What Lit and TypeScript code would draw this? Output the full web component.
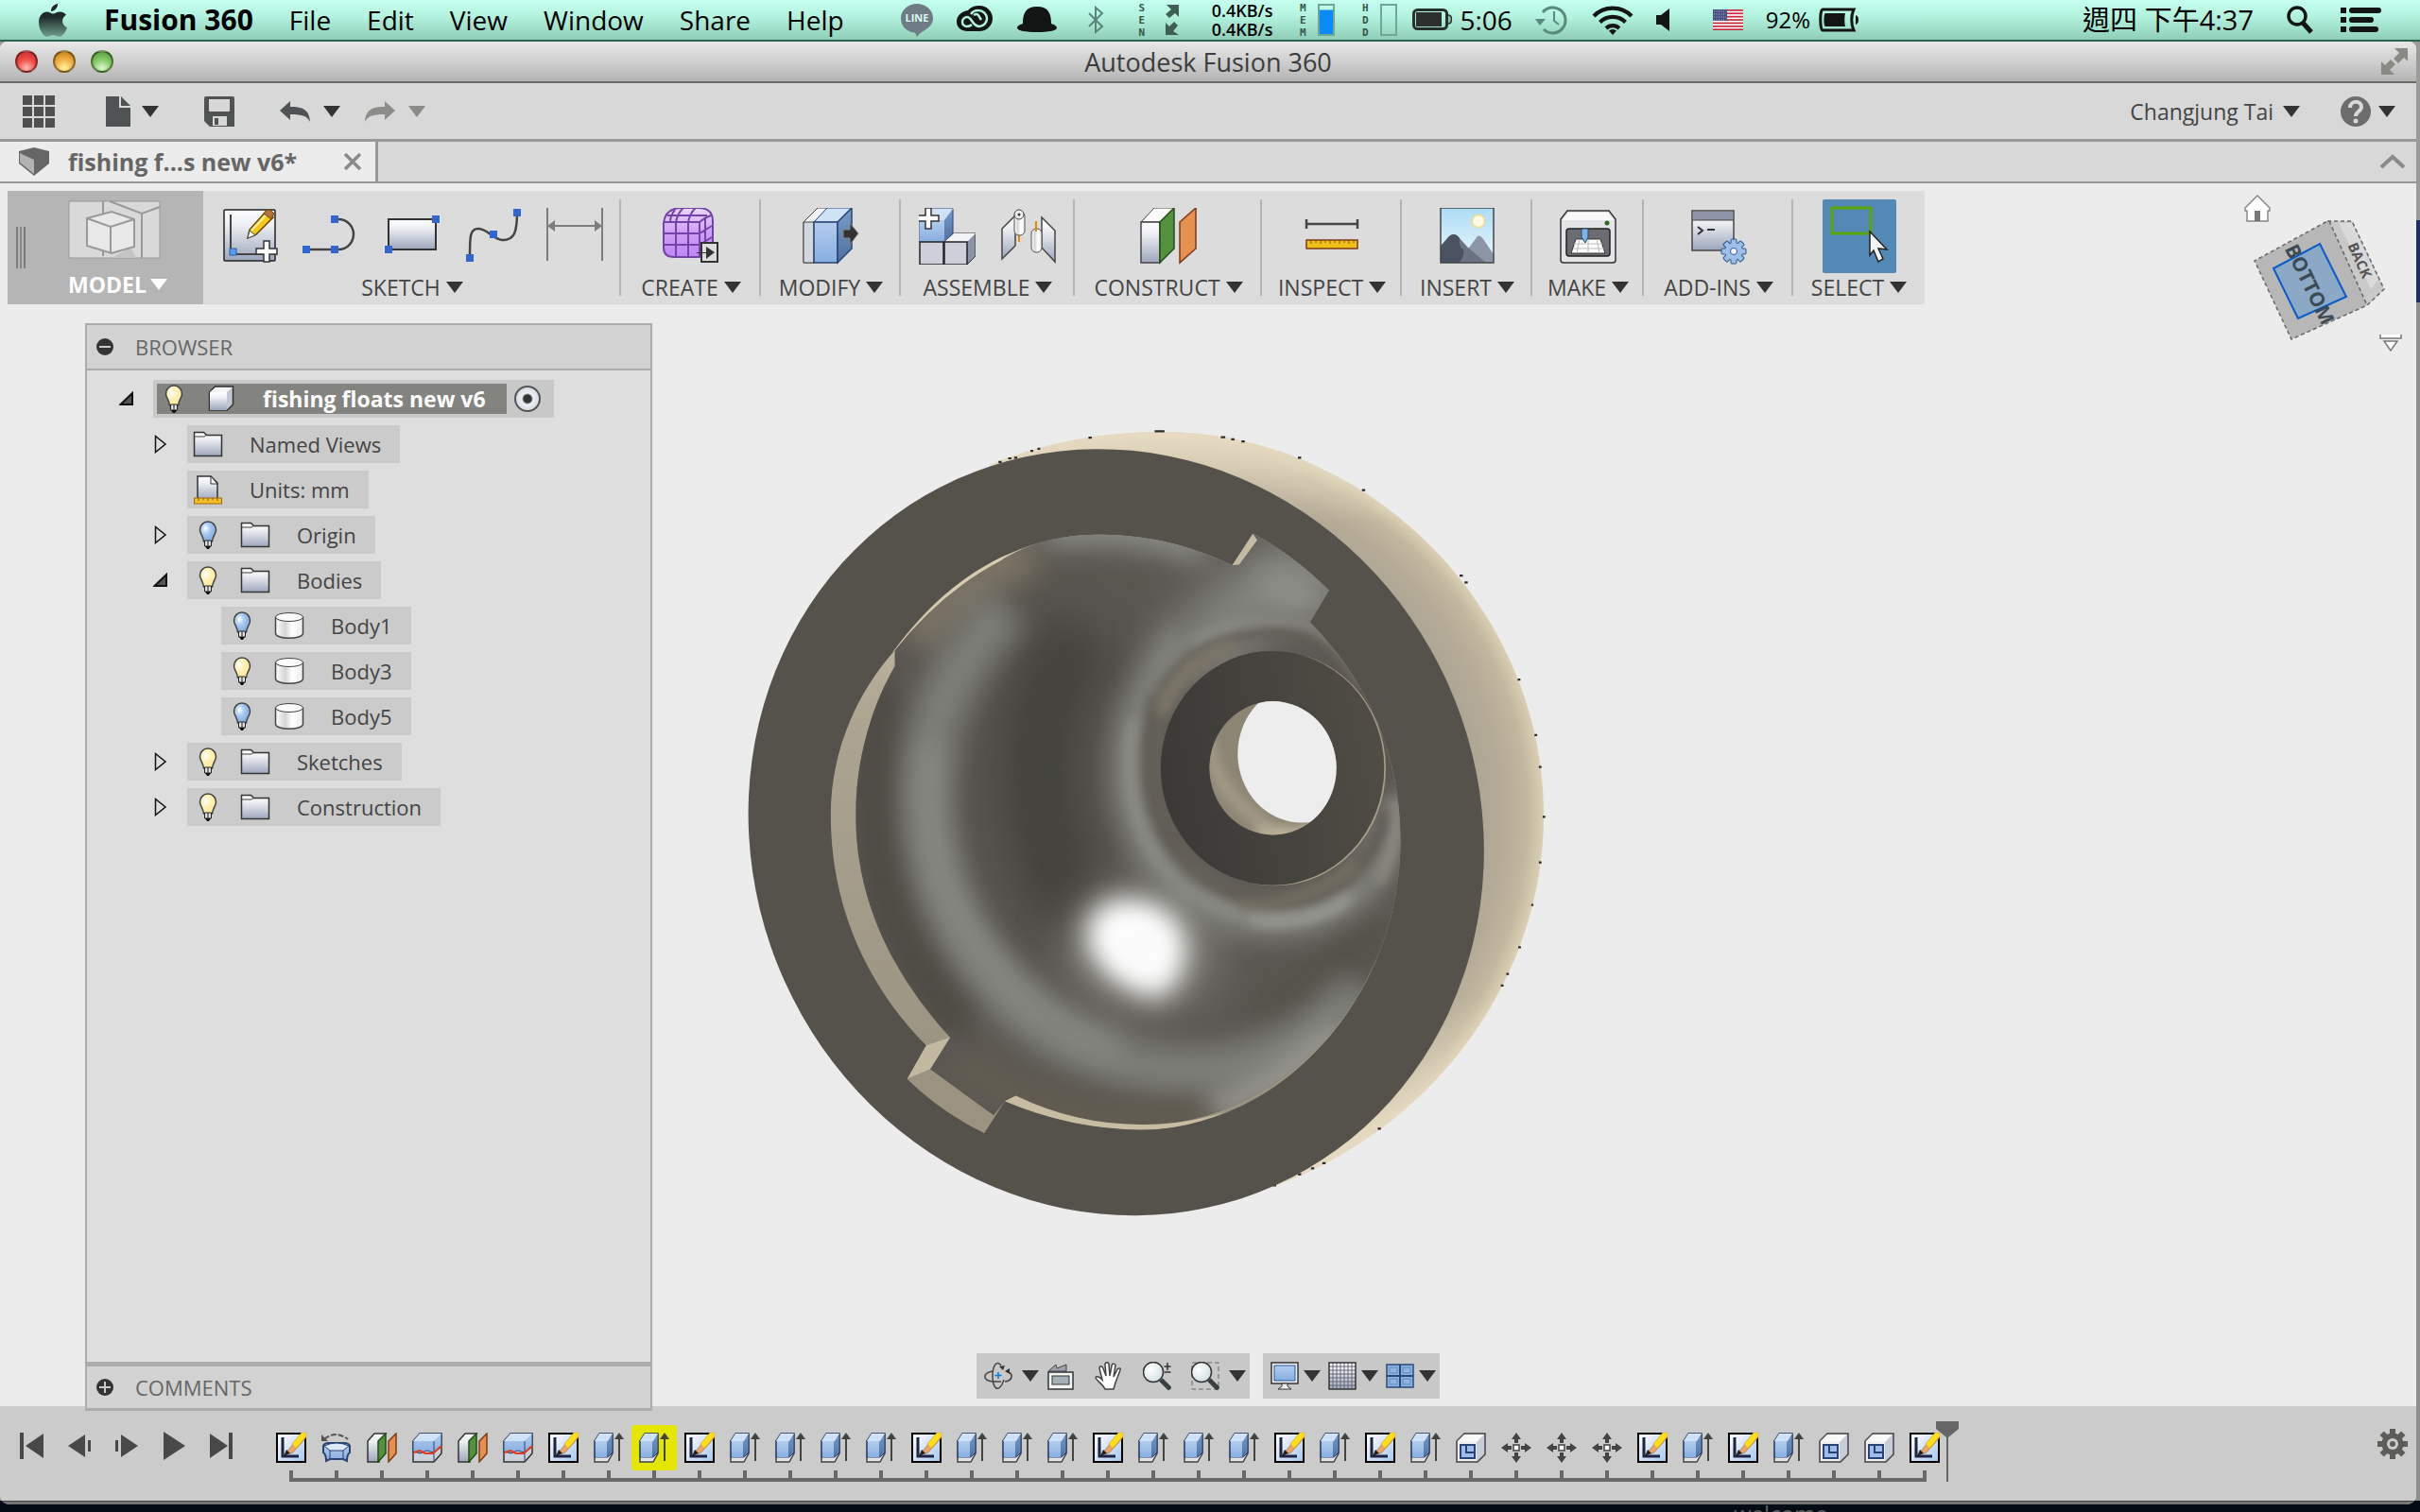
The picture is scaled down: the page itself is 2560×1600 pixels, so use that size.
import { LitElement, html, svg, css, nothing, TemplateResult, SVGTemplateResult } from "lit";
import { customElement, state } from "lit/decorators.js";
import { classMap } from "lit/directives/class-map.js";

const icon = (w: number, h: number, body: SVGTemplateResult, cls = "") =>
  html`<svg class=${cls} width=${w} height=${h} viewBox="0 0 ${w} ${h}" fill="none" aria-hidden="true">${body}</svg>`;

const caret = (w = 18) => icon(w, 12, svg`<path d="M0 0H${w}L${w / 2} 12Z" fill="currentColor"/>`, "caret");

/* ---------- shared paint ---------- */
const defs = svg`<defs>
  <linearGradient id="steel" x1="0" y1="0" x2="0" y2="1"><stop offset="0" stop-color="#fff"/><stop offset=".3" stop-color="#eceef2"/><stop offset="1" stop-color="#9ca6bb"/></linearGradient>
  <linearGradient id="paper" x1="0" y1="0" x2="1" y2="1"><stop offset="0" stop-color="#fff"/><stop offset="1" stop-color="#a9c8ee"/></linearGradient>
  <linearGradient id="sky" x1="0" y1="0" x2="0" y2="1"><stop offset="0" stop-color="#acdcf6"/><stop offset="1" stop-color="#eef8fc"/></linearGradient>
  <linearGradient id="side" x1="0" y1="0" x2="0" y2="1"><stop offset="0" stop-color="#7a9ccb"/><stop offset="1" stop-color="#4e709f"/></linearGradient>
  <linearGradient id="face" x1="0" y1="0" x2="0" y2="1"><stop offset="0" stop-color="#b4cdee"/><stop offset="1" stop-color="#86aee0"/></linearGradient>
  <linearGradient id="purple" x1="0" y1="0" x2="0" y2="1"><stop offset="0" stop-color="#ead9fa"/><stop offset=".5" stop-color="#cf9ff5"/><stop offset="1" stop-color="#bf86f6"/></linearGradient>
  <linearGradient id="tube" x1="0" y1="0" x2="1" y2="0"><stop offset="0" stop-color="#fff"/><stop offset=".35" stop-color="#d4d4d4"/><stop offset=".6" stop-color="#fff"/><stop offset="1" stop-color="#ededed"/></linearGradient>
  <radialGradient id="bulbOn" cx=".35" cy=".35" r=".7"><stop offset="0" stop-color="#fff"/><stop offset=".4" stop-color="#fff3bd"/><stop offset="1" stop-color="#fbe694"/></radialGradient>
  <radialGradient id="bulbOff" cx=".35" cy=".35" r=".7"><stop offset="0" stop-color="#fff"/><stop offset=".4" stop-color="#a9caf0"/><stop offset="1" stop-color="#7fa8dc"/></radialGradient>
  <radialGradient id="lens" cx=".35" cy=".35" r=".8"><stop offset="0" stop-color="#fff"/><stop offset="1" stop-color="#ccdcdc"/></radialGradient>
  <linearGradient id="apple" x1="0" y1="0" x2="0" y2="1"><stop offset="0" stop-color="#1c2322"/><stop offset=".4" stop-color="#1e2b28"/><stop offset="1" stop-color="#6f9d8e"/></linearGradient>
</defs>`;

/* ---------- menu bar ---------- */
const appleLogo = icon(32, 38, svg`<path fill="url(#apple)" d="M21 2c.4 3.600-3 8-7 8-.4-4 3.200-7.500 7-8zM16 12.500c1.800 0 4-2 7.500-2 3 0 5.200 1.500 6.500 3.300-5.800 3.500-4.900 11 1 13.400-1.600 4.600-4.900 9.600-8.300 9.600-2.700 0-3.400-1.600-6.500-1.600s-4 1.600-6.500 1.600C5.500 36.800 1 28.500 1 21.500c0-7 4.300-11 8.600-11 2.900 0 4.900 2 6.400 2z"/>`);
const lineBadge = icon(36, 36, svg`<path fill="#6f7b85" d="M18 1a17 15.500 0 0 1 17 15.500c0 7-6 11-10.500 13.500-3 2-5 3.500-6.500 6-1-2-1-3.500-2.500-4.500C7 30.500 1 25 1 16.500A17 15.500 0 0 1 18 1z"/><text x="18" y="20" text-anchor="middle" font-size="11" font-weight="700" fill="#d9fbf0">LINE</text>`);
const creative = icon(40, 30, svg`<path fill="#121514" d="M12 5C15 1 20 0 24 0c8 0 14 6 14 13.500S32 27 24 27H11C5 27 0 23 0 17S5 6 12 5z"/><path d="M23 5c5 0 9 4 9 8.500S28.500 22 24 22c-4 0-6-3-8-6s-3-4-5-4-5 2-5 5 2 5 5 5 4-1 5-2M15 9c2-3 4-4 8-4M18 10c5-3 5 1 8 5" stroke="#b4f0de" stroke-width="2.500"/>`);
const hat = icon(42, 30, svg`<path fill="#121514" d="M6 19C6 8 9 1 21 1s15 7 15 18c3 1 6 2.500 6 4.500 0 3-9 4.500-21 4.500S0 26.500 0 23.500C0 21.500 3 20 6 19z"/>`);
const bluetooth = icon(34, 30, svg`<path d="M10 8l14 14-7 6V2l7 6-14 14" stroke="#5b8579" stroke-width="2"/>`);
const netArrows = icon(16, 34, svg`<path fill="#3f5f55" d="M2 1h13v13l-4-4-6 5-4-4 6-5zM15 33H1V20l4 4 5-5 4 4-5 6z"/>`);
const meter = (fill: number) => icon(18, 34, svg`<rect x="1" y="1" width="16" height="32" stroke="#6fa695" stroke-width="2"/><rect x="2" y=${2 + 30 * (1 - fill)} width="14" height=${30 * fill} fill="#0a8bf5"/>`);
const battery = icon(42, 24, svg`<rect x="1.500" y="1.500" width="35" height="20" rx="4" stroke="#26302d" stroke-width="3"/><rect x="4" y="4" width="27" height="15" fill="#2b302e"/><path d="M38 7c3 0 3.500 2 3.500 4.500S41 16 38 16" fill="#8fbfaf" stroke="#26302d" stroke-width="1.500"/>`);
const batteryBold = icon(44, 26, svg`<path d="M5 2H38c-3 6-3 16 0 22H5C2 24 2 2 5 2z" stroke="#121514" stroke-width="3"/><path d="M8 6h21c-1 4-1 10 0 14H8C6 20 6 6 8 6z" fill="#121514"/><path d="M40 8c4 1 4 9 0 10z" fill="#121514"/>`);
const timeMachine = icon(36, 32, svg`<path d="M8 8A13.500 13.500 0 1 1 9 26" stroke="#5b8a7c" stroke-width="3"/><path d="M0 15h11l-6 7z" fill="#5b8a7c"/><path d="M20 7v10l5 4" stroke="#5b8a7c" stroke-width="2"/>`);
const wifi = icon(44, 32, svg`<path d="M2 12a28 28 0 0 1 40 0M8.500 18.500a19 19 0 0 1 27 0M15 25a10 10 0 0 1 14 0" stroke="#121514" stroke-width="4.200"/><path d="M22 32l-4-4.500a6 6 0 0 1 8 0z" fill="#121514"/>`);
const speaker = icon(36, 24, svg`<path fill="#121514" d="M0 7h5l9-7v24l-9-7H0z"/>`);
const flag = icon(32, 22, svg`<rect width="32" height="22" fill="#fff"/>${[0, 1, 2, 3, 4, 5, 6].map((i) => svg`<rect y=${i * 3.4} width="32" height="1.700" fill="#c8283c"/>`)}<rect width="15" height="12" fill="#474f7f"/><path d="M1 2h13M1 5h13M1 8h13M1 11h13" stroke="#b9bfd8" stroke-width="1" stroke-dasharray="1 1.500"/>`);
const search = icon(44, 32, svg`<circle cx="22" cy="12" r="9" stroke="#121514" stroke-width="3.500"/><path d="M28 19l9 10" stroke="#121514" stroke-width="5"/>`);
const listIcon = icon(44, 28, svg`<path d="M0 4h6M0 14h6M0 24h6" stroke="#121514" stroke-width="6"/><path d="M12 4h28M12 14h20M12 24h25" stroke="#121514" stroke-width="6" stroke-linecap="round"/>`);

/* ---------- window and quick bar ---------- */
const fullscreen = icon(30, 30, svg`<path fill="#8a8a84" d="M15 1h14v14l-4-4-6 6-5-5 6-6zM15 29H1V15l4 4 6-6 5 5-6 6z"/>`);
const apps = icon(34, 34, svg`${[0, 12, 24].map((y) => [0, 12, 24].map((x) => svg`<rect x=${x} y=${y} width="10" height="10" fill="#505050"/>`))}`);
const fileIcon = icon(26, 32, svg`<path fill="#505353" d="M0 0h14v12h12v20H0z"/><path fill="#505353" d="M16 0l10 10H16z"/>`);
const saveIcon = icon(32, 32, svg`<path fill="#505353" fill-rule="evenodd" d="M2 0h28q2 0 2 2v30H6l-6-6V2q0-2 2-2zM5 3v12q0 1 1 1h20q1 0 1-1V3zM9 21v10h15V21z"/><path d="M11 23h4v7h-4z" fill="#505353"/>`);
const undoIcon = icon(32, 22, svg`<path fill="currentColor" d="M0 10L11 0v6c12 0 20 2 21 16-3-6-8-8-21-8v6z"/>`);
const redoIcon = icon(32, 22, svg`<path fill="currentColor" d="M32 10L21 0v6C9 6 1 8 0 22c3-6 8-8 21-8v6z"/>`);
const help = icon(32, 32, svg`<circle cx="16" cy="16" r="16" fill="#6c6c6c"/><path d="M10 12c0-8 12-8 12-1 0 5-6 5-6 10" stroke="#d8d8d8" stroke-width="4"/><circle cx="16" cy="26" r="2.500" fill="#d8d8d8"/>`);
const docCube = icon(32, 30, svg`<path fill="#666" d="M0 4L16 0l16 4v13L16 30 0 17z"/><path fill="#b2b2b2" d="M1 6l15 7v15L1 16z"/>`);
const closeX = icon(20, 20, svg`<path d="M2 2l16 16M18 2L2 18" stroke="#8a8a8a" stroke-width="3.500"/>`);
const chevUp = icon(28, 16, svg`<path d="M2 14L14 3l12 11" stroke="#8a8a8a" stroke-width="4"/>`);

/* ---------- ribbon ---------- */
const plus = (x: number, y: number) => svg`<path transform="translate(${x} ${y})" d="M-3-11h6v8h8v6h-8v8h-6v-8h-8v-6h8z" fill="#fff" stroke="#333" stroke-width="1.500"/>`;
const node = (x: number, y: number) => svg`<rect x=${x - 4} y=${y - 4} width="8" height="8" fill="#3566cf"/>`;
const ribbonIcons: Record<string, TemplateResult> = {
  sketch: icon(60, 60, svg`<rect x="3" y="2" width="54" height="54" rx="1" fill="url(#steel)" stroke="#222" stroke-width="1.500"/><path d="M10 7v42h36" stroke="#444" stroke-width="2"/><rect x="9" y="43" width="7" height="7" fill="#5b9cf0" stroke="#2a5fa8"/><path d="M28 32l2-9L47 4l8 6-18 18z" fill="#f6c81a" stroke="#6b4b10" stroke-width="1.500"/><path d="M32 24L49 6" stroke="#fff2a0" stroke-width="2"/><path d="M45 6l3-4q5-1 8 4l-3 6z" fill="#b9703a" stroke="#6b4b10"/><path d="M28 32l2-8 6 5z" fill="#fff" stroke="#444"/>${plus(48, 46)}`),
  line: icon(60, 60, svg`<path d="M4 44h34a16 16 0 0 0 0-32h-4" stroke="#444" stroke-width="2.500"/>${node(4, 44)}${node(34, 44)}${node(34, 12)}`),
  rect: icon(60, 60, svg`<rect x="5" y="12" width="50" height="32" fill="url(#steel)" stroke="#333" stroke-width="2"/>${node(5, 44)}${node(55, 12)}`),
  spline: icon(60, 60, svg`<path d="M5 53C5 30 5 22 14 22c10 0 16 12 26 12 12 0 15-8 15-30" stroke="#444" stroke-width="2.500"/>${node(5, 53)}${node(30, 28)}${node(55, 5)}`),
  dimension: icon(60, 60, svg`<path d="M1 0v56M59 0v56M6 19h48" stroke="#7d7d7d" stroke-width="2"/><path d="M1 19l8-6v12zM59 19l-8-6v12z" fill="#7d7d7d"/>`),
  form: icon(60, 60, svg`<path d="M1 16Q3 0 20 0h18q15 0 15 14v22q0 6-6 12-3 4-10 4H12Q1 52 1 42z" fill="url(#purple)" stroke="#7443a8" stroke-width="2"/><path d="M39 15v36M39 15H2M39 15q6-5 12-7M13 2Q8 8 8 15M1 27h38l13-8M1 39h38l13-8M14 52V15q2-10 8-15M27 52V15q2-10 8-15M45 47V11M5 8h42" stroke="#7443a8" stroke-width="2"/><rect x="41" y="37" width="17" height="20" fill="#ddd" stroke="#333" stroke-width="2"/><path d="M36 47h10v-6l9 6-9 7v-6H36z" fill="#333"/>`),
  press: icon(60, 60, svg`<path d="M1 15L16 0h11L12 15v43H1z" fill="#f4f4f6" stroke="#444"/><path d="M1 15h11v43H1z" fill="#d3d7df" stroke="#444"/><path d="M12 15L26 0h26L37 15z" fill="#cfe2f6" stroke="#2a4372"/><path d="M12 15h25v43H12z" fill="url(#face)" stroke="#2a4372" stroke-width="1.500"/><path d="M37 15L52 0v43L37 58z" fill="url(#side)" stroke="#2a4372" stroke-width="1.500"/><path d="M43 23h7v-7l9 11-9 12v-7h-7z" fill="#333" stroke="#888"/>`),
  component: icon(60, 60, svg`<path d="M1 13L12 1h24v26L27 36H1z" fill="url(#side)" stroke="#2a4372"/><path d="M1 13L12 1h24L27 13z" fill="#cfe2f6"/><path d="M1 13h26v23H1z" fill="url(#face)"/><path d="M27 36l10-9h23v24l-9 9H27z" fill="#8c93a6" stroke="#333"/><path d="M27 36l10-9h23l-9 9z" fill="#f2f3f5"/><path d="M1 36h25v24H1zM27 36h24v24H27z" fill="#cdd0da" stroke="#222" stroke-width="1.500"/>${plus(10, 11)}`),
  joint: icon(60, 60, svg`<path d="M2 22L16 8v32L2 54z" fill="url(#steel)" stroke="#444" stroke-width="1.500"/><path d="M44 10l14 14v33L44 42z" fill="url(#steel)" stroke="#444" stroke-width="1.500"/><path d="M20 26v10M38 14v14" stroke="#e08a00" stroke-width="2"/><rect x="15" y="4" width="11" height="25" rx="5" fill="url(#tube)" stroke="#555"/><circle cx="20" cy="7" r="5" fill="#eee" stroke="#444"/><circle cx="20" cy="7" r="1.500" fill="#333"/><rect x="33" y="22" width="11" height="25" rx="5" fill="url(#tube)" stroke="#555"/><path d="M38 14v11" stroke="#e08a00" stroke-width="2"/>`),
  plane: icon(60, 60, svg`<path d="M1 15L15 0h21L21 15z" fill="#fafafa" stroke="#444"/><path d="M1 15h20v43H1z" fill="url(#steel)" stroke="#444" stroke-width="1.500"/><path d="M21 15L36 0v43L21 58z" fill="#55903f" stroke="#234d17" stroke-width="1.500"/><path d="M42 15L59 0v43L42 58z" fill="#e8904f" stroke="#7c3a14" stroke-width="1.500"/>`),
  measure: icon(60, 60, svg`<path d="M3 17h54M3 12v10M57 12v10" stroke="#444" stroke-width="2.500"/><rect x="3" y="34" width="54" height="9" fill="#f0c01a" stroke="#7c3a14" stroke-width="1.500"/><path d="M8 35v3M13 35v2M18 35v3M23 35v2M28 35v3M33 35v2M38 35v3M43 35v2M48 35v3M53 35v2" stroke="#7c5a14"/>`),
  picture: icon(60, 60, svg`<rect x="2" y="0" width="56" height="58" fill="url(#sky)"/><circle cx="42" cy="14" r="6.500" fill="#fffbe6" stroke="#f5dd88" stroke-width="1.500"/><path d="M26 50l15-20q3-2 6 3l11 16v9H30z" fill="#8b95a6"/><path d="M2 40l8-9q6-6 11 0l10 11 19 16H2z" fill="#6c7484"/><path d="M2 58V41l9-11q6-5 11 2-1 10 4 12 2 8-5 14z" fill="#4b5362"/><rect x="2" y="0" width="56" height="58" stroke="#444" stroke-width="1.500"/>`),
  printer: icon(60, 60, svg`<path d="M1 12L8 3h44l7 9v43q0 3-3 3H4q-3 0-3-3z" fill="#e4e4e6" stroke="#333" stroke-width="1.500"/><path d="M3 13L9 5h42l6 8z" fill="#fafafa"/><rect x="7" y="22" width="46" height="29" rx="3" fill="#6b6d70" stroke="#222" stroke-width="1.500"/><path d="M17 33h26l5 15H12z" fill="#fff" stroke="#333"/><path d="M21 33l-3 15M30 33v15M39 33l3 15M15 38h30M14 43h33" stroke="#bbb"/><path d="M23 22h7v9l-3 6-4-6z" fill="#7fb0e6" stroke="#2a4372"/><circle cx="50" cy="16" r="2.500" fill="#2e6a20"/>`),
  script: icon(60, 60, svg`<rect x="2" y="3" width="44" height="42" fill="url(#steel)" stroke="#444" stroke-width="1.500"/><rect x="3" y="4" width="42" height="9" fill="#8d95a6"/><path d="M2 13h44" stroke="#444"/><path d="M8 20l5 4-5 4M18 23h8" stroke="#333" stroke-width="2"/><g transform="translate(46 46)">${[0, 45, 90, 135].map((a) => svg`<rect x="-3" y="-13" width="6" height="26" rx="1" transform="rotate(${a})" fill="#9dbfe8" stroke="#2a5590"/>`)}<circle r="9" fill="#9dbfe8"/><circle r="3.500" fill="#fff" stroke="#2a5590"/></g>`),
  select: icon(78, 78, svg`<rect width="78" height="78" rx="2" fill="#5489b5"/><rect x="10" y="9" width="41" height="27" stroke="#59a608" stroke-width="3"/><path d="M50 34l18 19-9-1 5 11-5 3-5-12-4 5z" fill="#f5f5f5" stroke="#222" stroke-width="1.500"/>`),
};

const workspaceIcon = icon(98, 62, svg`<rect x="1" y="1" width="96" height="60" fill="#d9d9d9" stroke="#999"/><path d="M37 1v58M44 1l34 13L97 7M78 14v47" stroke="#999" stroke-width="2"/><path d="M66 50l6 11H46z" fill="#c4c4c4"/><path d="M20 19l26-7 24 8v29l-24 7-26-8z" fill="#e8e8e8" stroke="#999" stroke-width="2"/><path d="M20 19l25 9 25-8M45 28v28" stroke="#999" stroke-width="2"/>`);

interface Group { label: string; icons: string[]; }
const groups: Group[] = [
  { label: "SKETCH", icons: ["sketch", "line", "rect", "spline", "dimension"] },
  { label: "CREATE", icons: ["form"] },
  { label: "MODIFY", icons: ["press"] },
  { label: "ASSEMBLE", icons: ["component", "joint"] },
  { label: "CONSTRUCT", icons: ["plane"] },
  { label: "INSPECT", icons: ["measure"] },
  { label: "INSERT", icons: ["picture"] },
  { label: "MAKE", icons: ["printer"] },
  { label: "ADD-INS", icons: ["script"] },
  { label: "SELECT", icons: ["select"] },
];

/* ---------- browser tree ---------- */
const bulb = (on: boolean) => icon(32, 32, svg`<path d="M16 2c5 0 8.500 4 8.500 9 0 4-3.500 6-4 12h-9c-.5-6-4-8-4-12 0-5 3.500-9 8.500-9z" fill="url(#${on ? "bulbOn" : "bulbOff"})" stroke="#444" stroke-width="1.500"/><path d="M12.500 22h7v6h-7z" fill="#ddd" stroke="#222"/><path d="M16 22v6" stroke="#222"/><path d="M13 28h6l-2 3h-2z" fill="#111"/>`);
const treeIcons: Record<string, TemplateResult> = {
  folder: icon(32, 32, svg`<path d="M1.500 3.500h10l3 3h16v22h-29z" fill="url(#steel)" stroke="#333" stroke-width="1.500"/><path d="M2 8h10l3-2" stroke="#444"/>`),
  units: icon(32, 32, svg`<path d="M5 2h14l7 7v18H5z" fill="url(#steel)" stroke="#333" stroke-width="1.500"/><path d="M19 2v8h7z" fill="#fff" stroke="#333"/><rect x="1.500" y="25" width="29" height="6" fill="#f2c026" stroke="#a5660e"/><path d="M6 25v3M11 25v2M16 25v3M21 25v2M26 25v3" stroke="#7c5a14"/>`),
  body: icon(32, 32, svg`<path d="M1.500 7v17c0 7 29 7 29 0V7z" fill="url(#tube)" stroke="#444" stroke-width="1.500"/><ellipse cx="16" cy="7" rx="14.500" ry="4.500" fill="#fafafa" stroke="#444"/>`),
  part: icon(32, 32, svg`<path d="M3.500 9l6-6h19v19l-6 6h-19z" fill="#c3c7d2" stroke="#333" stroke-width="1.500"/><path d="M4 9l6-5h18l-6 5z" fill="#f3f4f6"/><path d="M4 9h18v19H4z" fill="url(#steel)"/>`),
};
const closedTri = icon(14, 20, svg`<path d="M1.500 1.500L12 10 1.500 18.500z" stroke="#111" stroke-width="1.500"/>`);
const openTri = icon(16, 16, svg`<path d="M1.500 14L14 2v12z" fill="#555" stroke="#111" stroke-width="2"/>`);
const minusDot = icon(18, 18, svg`<circle cx="9" cy="9" r="9" fill="#333"/><path d="M3 9h12" stroke="#ccc" stroke-width="2"/>`);
const plusDot = icon(18, 18, svg`<circle cx="9" cy="9" r="9" fill="#333"/><path d="M3 9h12M9 3v12" stroke="#ccc" stroke-width="2"/>`);

interface Node { label: string; level: number; kind: string; bulb?: boolean; open?: boolean; root?: boolean; }
const nodes: Node[] = [
  { label: "fishing floats new v6", level: 0, kind: "part", bulb: true, open: true, root: true },
  { label: "Named Views", level: 1, kind: "folder", open: false },
  { label: "Units: mm", level: 1, kind: "units" },
  { label: "Origin", level: 1, kind: "folder", bulb: false, open: false },
  { label: "Bodies", level: 1, kind: "folder", bulb: true, open: true },
  { label: "Body1", level: 2, kind: "body", bulb: false },
  { label: "Body3", level: 2, kind: "body", bulb: true },
  { label: "Body5", level: 2, kind: "body", bulb: false },
  { label: "Sketches", level: 1, kind: "folder", bulb: true, open: false },
  { label: "Construction", level: 1, kind: "folder", bulb: true, open: false },
];

/* ---------- navigation bar ---------- */
const glass = svg`<circle cx="11" cy="11" r="10.500" fill="url(#lens)" stroke="#333" stroke-width="1.500"/><path d="M19 19l10 10" stroke="#3a3f42" stroke-width="5"/>`;
const nav: Record<string, TemplateResult> = {
  orbit: icon(30, 30, svg`<path d="M18 4C14-2 9 3 9 15s5 18 10 9l2-5" stroke="#444" stroke-width="1.500"/><path d="M9 10C-2 12-2 20 10 21h8M24 10c8 3 6 10-2 11" stroke="#444" stroke-width="1.500"/><path d="M15 11v7M11.500 14.500h7" stroke="#0a78d8" stroke-width="1.500"/><path d="M22 10l5-3v6zM16 5l6-1-2 5z" fill="#333"/>`),
  look: icon(30, 30, svg`<path d="M2 10L10 3l1 4 10-4v7z" fill="#9ba3ad" stroke="#444"/><rect x="2" y="11" width="26" height="18" fill="#f4f6f6" stroke="#333" stroke-width="1.500"/><rect x="6" y="15" width="18" height="9" fill="#a5b0b8" stroke="#333"/>`),
  pan: icon(30, 30, svg`<path d="M11 29C9 24 3 21 1 17c0-2 3-2 7 2L5 7c0-3 3-3 4 0l3 8-1-12c0-3 4-3 4 0l1 12 2-11c1-3 4-2 4 0l-2 12 4-8c2-2 4-1 3 1l-5 13-2 7z" fill="#fff" stroke="#444" stroke-width="1.500"/>`),
  zoom: icon(30, 30, svg`${glass}<path d="M26 1v8M22.500 5h7M22.500 11h7" stroke="#333" stroke-width="1.500"/>`),
  fit: icon(30, 30, svg`<rect x="1" y="1" width="28" height="28" stroke="#666" stroke-dasharray="5 3"/>${glass}`),
  display: icon(30, 30, svg`<rect x="1" y="1" width="28" height="22" fill="#f2f5f8" stroke="#333" stroke-width="1.500"/><rect x="4" y="4" width="22" height="16" fill="url(#face)" stroke="#2a5590"/><path d="M12 23h6v3l4 3H8l4-3z" fill="#eee" stroke="#333"/>`),
  grid: icon(30, 30, svg`<rect x="1" y="1" width="28" height="28" fill="url(#steel)"/><path d="M1 5H29M1 9H29M1 13H29M1 17H29M1 21H29M1 25H29M5 1V29M9 1V29M13 1V29M17 1V29M21 1V29M25 1V29" stroke="#667"/><rect x="1" y="1" width="28" height="28" stroke="#333" stroke-width="1.500"/>`),
  views: icon(30, 26, svg`<rect x="1" y="1" width="28" height="24" fill="#8fb4e4" stroke="#2a4878" stroke-width="1.500"/><path d="M15 1v24M1 13h28" stroke="#2a4878" stroke-width="2"/><path d="M4 4h8v6H4zM18 4h8v6h-8zM4 16h8v6H4zM18 16h8v6h-8z" stroke="#5b86c0"/>`),
};

/* ---------- timeline ---------- */
const features: Record<string, TemplateResult> = {
  s: icon(32, 32, svg`<rect x="1" y="1" width="30" height="30" fill="url(#paper)" stroke="#000" stroke-width="2"/><path d="M7 5v20h17" stroke="#1f2540" stroke-width="3"/><path d="M10 22L28 0h4v5L17 22z" fill="#e9a56a" stroke="#8a5a20" stroke-width=".5"/><path d="M17 12L27 0h5v4L21 17z" fill="#ffdf1c" stroke="#c98a00" stroke-width=".5"/><path d="M8 25l3-7 4 4z" fill="#222"/>`),
  r: icon(32, 32, svg`<path d="M3 7q12-10 25 0" stroke="#555" stroke-width="2" stroke-dasharray="6 2"/><path d="M0 2v7h7z" fill="#555"/><path d="M2 14q1-3 6-3h16q5 0 6 3v7q-3 2-3 9l-4-2H9l-4 2q0-7-3-9z" fill="url(#face)" stroke="#2a4372" stroke-width="2"/><path d="M3 14q13-6 26 0l-6 5H9z" fill="#dbe9f8" stroke="#2a4372"/><path d="M9 19v9M23 19v9" stroke="#2a4372"/>`),
  p: icon(32, 32, svg`<path d="M1 9l7-8h12l-7 8v22H1z" fill="url(#steel)" stroke="#333" stroke-width="1.500"/><path d="M12 9l8-8v21l-8 9z" fill="#55903f" stroke="#234d17" stroke-width="1.500"/><path d="M23 9l8-8v21l-8 9z" fill="#e8904f" stroke="#7c3a14" stroke-width="1.500"/>`),
  x: icon(32, 32, svg`<path d="M1 9l7-8h23v21l-8 9H1z" fill="#ccd2dc" stroke="#333" stroke-width="1.500"/><path d="M1 9l7-8h23v14l-8 6-8-2-6 3-8-2z" fill="url(#face)" stroke="#2a4372"/><path d="M1 9l7-8h23l-8 8z" fill="#cfe2f6"/><path d="M23 9v22" stroke="#2a4372"/><path d="M2 21l6-2 6 3h8l9-8" stroke="#e03a18" stroke-width="2"/>`),
  e: icon(32, 32, svg`<path d="M1 9l5-8h14v21l-5 9H1z" fill="#e3e5ea" stroke="#444" stroke-width="1.500"/><path d="M1 9l5-8h14v20l-5 5H1z" fill="url(#side)" stroke="#2a4372"/><path d="M1 9l5-8h14l-5 8z" fill="#cfe2f6"/><path d="M2 9h12v17H2z" fill="url(#face)"/><path d="M27 4v26" stroke="#444" stroke-width="2"/><path d="M27 0l5 7H22z" fill="#444"/>`),
  h: icon(32, 32, svg`<path d="M1 9l8-8h22v22l-8 8H1z" fill="#c8ccd8" stroke="#444" stroke-width="1.500"/><path d="M2 9l7-7h21l-7 7z" fill="#fafafa"/><path d="M2 9h20v21H2z" fill="#f0f1f4"/><rect x="5" y="13" width="15" height="14" fill="#9dbdea" stroke="#2a4372" stroke-width="2"/><path d="M11 14v7h8" stroke="#2a4372" stroke-width="2"/>`),
  m: icon(32, 32, svg`<path d="M16 0l5 7h-3v4h-4V7h-3zM16 32l5-7h-3v-4h-4v4h-3zM0 16l7-5v3h4v4H7v3zM32 16l-7-5v3h-4v4h4v3z" fill="#444"/><rect x="13" y="13" width="6" height="6" fill="#fff" stroke="#444" stroke-width="1.500"/>`),
};
const featureNames: Record<string, string> = { s: "Sketch", r: "Revolve", p: "Construction plane", x: "Split body", e: "Extrude", h: "Shell", m: "Move" };
const history = "srpxpxseeseeeeseeeseeesesehmmmsesehhs";

const gear = icon(34, 34, svg`<g transform="translate(17 17)">${[0, 45, 90, 135].map((a) => svg`<rect x="-3" y="-16" width="6" height="32" transform="rotate(${a})" fill="#5c5c58"/>`)}<circle r="11.500" fill="#5c5c58"/><circle r="6" fill="#ccc"/><circle r="3" fill="#5c5c58"/></g>`);
const transport: [string, TemplateResult][] = [
  ["Go to start", icon(26, 28, svg`<path d="M0 0h4v28H0zM25 1v26L6 14z" fill="#484848"/>`)],
  ["Step back", icon(26, 28, svg`<path d="M19 2v24L1 14zM22 8h3v12h-3z" fill="#484848"/>`)],
  ["Step forward", icon(26, 28, svg`<path d="M7 2v24l18-12zM1 8h3v12H1z" fill="#484848"/>`)],
  ["Play", icon(26, 30, svg`<path d="M2 0v30l23-15z" fill="#484848"/>`)],
  ["Go to end", icon(26, 28, svg`<path d="M21 0h4v28h-4zM1 1v26l19-13z" fill="#484848"/>`)],
];

/* ---------- 3D body ---------- */
const cavity = "M383 1205C280 1100 207 950 207 770C207 650 255 540 325 460C420 320 560 242 700 242C790 242 870 262 947 300L985 240Q1060 280 1125 347L1090 407C1200 520 1257 660 1257 820C1257 1110 1040 1363 780 1363Q650 1363 528 1310L490 1370Q410 1330 348 1268Z";
const hull = "M500 110Q650 48 820 48C1200 50 1521 380 1521 770C1521 1080 1320 1360 1020 1472Z";
const modelView = html`<svg class="model" viewBox="0 0 1568 1568" preserveAspectRatio="none" fill="none" role="img" aria-label="Fishing float body">
  <defs>
    <clipPath id="floor"><path d="M325 490C280 570 253 670 253 770C253 930 320 1070 427 1190L390 1250L507 1337L528 1310L548 1300Q660 1355 780 1355C1040 1355 1257 1110 1257 820C1257 660 1200 520 1090 407L1125 347Q1060 280 985 240L947 300Q830 242 700 242Q600 242 530 285Q400 350 325 460Z"/></clipPath>
    <clipPath id="bore"><ellipse cx="1022" cy="682" rx="117" ry="126"/></clipPath>
    <filter id="b8" filterUnits="userSpaceOnUse" x="0" y="0" width="1568" height="1568" color-interpolation-filters="sRGB"><feGaussianBlur stdDeviation="10"/></filter>
    <filter id="b20" filterUnits="userSpaceOnUse" x="0" y="0" width="1568" height="1568" color-interpolation-filters="sRGB"><feGaussianBlur stdDeviation="25"/></filter>
    <filter id="b40" filterUnits="userSpaceOnUse" x="0" y="0" width="1568" height="1568" color-interpolation-filters="sRGB"><feGaussianBlur stdDeviation="46"/></filter>
    <radialGradient id="shell" gradientUnits="userSpaceOnUse" cx="800" cy="770" r="722"><stop offset=".8" stop-color="#aba393"/><stop offset=".9" stop-color="#b5ab97"/><stop offset=".96" stop-color="#c3b9a0"/><stop offset="1" stop-color="#dcd1b6"/></radialGradient>
    <linearGradient id="shellEnds" x1="0" y1="0" x2="0" y2="1"><stop offset="0" stop-color="#e6dac2"/><stop offset=".12" stop-color="#e6dac2" stop-opacity="0"/><stop offset=".75" stop-color="#e6dac2" stop-opacity="0"/><stop offset=".95" stop-color="#e6dac2"/></linearGradient>
    <linearGradient id="boss" x1="0" y1=".6" x2="1" y2=".4"><stop offset="0" stop-color="#3b3936"/><stop offset=".5" stop-color="#45433e"/><stop offset="1" stop-color="#504d45"/></linearGradient>
    <linearGradient id="wall" x1="0" y1="0" x2="0" y2="1"><stop offset="0" stop-color="#d5caaf"/><stop offset=".3" stop-color="#ada492"/><stop offset="1" stop-color="#97917f"/></linearGradient>
  </defs>
  <path d=${hull} fill="url(#shell)"/>
  <path d=${hull} fill="url(#shellEnds)"/>
  <path d="M804 47h18M926 58h8M945 62h6M964 66h6M1068 97h6M1186 158h6M1366 319h6M1375 332h6M1473 515h5M1504 620h5M1512 680h5M1519 774h5M1512 860h5M1498 940h4M1474 1020h5M1452 1070h5M1442 1092h5M1215 1362h6M1113 1427h6M1092 1437h6M1068 1448h6M1022 1469h6M682 59h6M588 80h5M575 84h5M545 97h6M534 98h6M516 105h6" stroke="#2c2b28" stroke-width="4"/>
  <ellipse cx="733" cy="803" rx="672" ry="728" transform="rotate(-18.600 733 803)" fill="#54524b"/>
  <path d=${cavity} fill="url(#wall)"/>
  <g clip-path="url(#floor)">
    <rect x="190" y="220" width="1100" height="1180" fill="#5b5852"/>
    <path d="M360 440Q440 330 580 270" stroke="#7a7365" stroke-width="90" filter="url(#b20)"/>
    <path d="M600 235Q760 215 900 270" stroke="#8b8c87" stroke-width="64" filter="url(#b20)"/>
    <path d="M680 420Q580 540 590 720Q610 900 680 980" stroke="#42413c" stroke-width="150" filter="url(#b40)"/>
    <path d="M1210 960Q1130 1090 1000 1150" stroke="#55524b" stroke-width="80" filter="url(#b20)"/>
    <path d="M530 380C420 500 365 640 380 790C400 970 500 1110 640 1195C760 1260 900 1270 1010 1230Q1110 1190 1190 1100" stroke="#7d7e78" stroke-width="92" filter="url(#b20)"/>
    <path d="M395 640Q380 780 420 900Q460 1010 560 1110Q640 1180 740 1210" stroke="#8a8c86" stroke-width="40" filter="url(#b20)"/>
    <path d="M300 520Q255 780 320 960Q370 1080 450 1170" stroke="#4d4943" stroke-width="64" filter="url(#b20)"/>
    <path d="M900 1330Q1030 1290 1150 1180" stroke="#a3a29c" stroke-width="44" filter="url(#b20)"/>
    <path d="M440 1230Q600 1370 900 1345" stroke="#625c51" stroke-width="70" filter="url(#b20)"/>
    <path d="M870 500Q930 380 1060 310L1140 360" stroke="#888984" stroke-width="120" filter="url(#b40)"/>
    <path d="M1000 330L1110 370" stroke="#8d8e89" stroke-width="70" filter="url(#b20)"/>
    <path d="M860 430Q800 500 770 590C735 730 780 850 870 920C960 985 1090 990 1180 910Q1240 830 1250 740" stroke="#858680" stroke-width="62" filter="url(#b20)"/>
    <path d="M768 590C738 720 780 850 870 915C960 975 1080 985 1170 915" stroke="#8b8c86" stroke-width="24" filter="url(#b8)"/>
    <path d="M808 545C775 700 800 800 880 880C980 950 1090 945 1170 880Q1225 820 1232 760" stroke="#605c54" stroke-width="26" filter="url(#b8)"/>
    <path d="M815 540Q900 410 1060 425Q1150 445 1210 580" stroke="#5f5b54" stroke-width="18" filter="url(#b8)"/>
    <path d="M870 445Q980 385 1090 415Q1150 445 1190 520" stroke="#92928c" stroke-width="12" filter="url(#b8)"/>
    <path d="M815 580Q850 480 950 450" stroke="#7d7668" stroke-width="28" filter="url(#b8)"/>
    <path d="M960 940Q1080 945 1180 860" stroke="#777164" stroke-width="18" filter="url(#b8)"/>
    <path d="M980 970Q1090 985 1160 930" stroke="#9c9c96" stroke-width="14" filter="url(#b8)"/>
    <path d="M1218 900Q1258 820 1246 740" stroke="#98948a" stroke-width="12" filter="url(#b8)"/>
    <ellipse cx="780" cy="1020" rx="130" ry="115" fill="#85857f" filter="url(#b40)"/>
    <path d="M735 930Q850 930 860 1020Q855 1110 795 1115Q685 1060 680 1000Q680 945 735 930Z" fill="#fff" filter="url(#b20)"/>
    <ellipse cx="772" cy="1020" rx="46" ry="46" fill="#fafafa" filter="url(#b20)"/>
  </g>
  <path d="M320 465Q410 340 530 280L522 290Q410 350 325 460Z" fill="#d8ccb0"/>
  <path d="M947 300L985 240L993 252L960 298Z" fill="#c5bba5"/>
  <path d="M383 1205L427 1190L390 1250L348 1268Z" fill="#c3b9a1"/>
  <path d="M348 1268L390 1250L507 1337L490 1370Q410 1330 348 1268Z" fill="#9c9280"/>
  <path d="M528 1310L548 1300Q660 1355 780 1354Q860 1355 935 1330Q860 1364 780 1364Q650 1363 528 1310Z" fill="#c8bda2"/>
  <ellipse cx="1025" cy="683" rx="205" ry="221" fill="#a79d88"/>
  <ellipse cx="1021" cy="682" rx="206" ry="221" fill="url(#boss)"/>
  <ellipse cx="1022" cy="682" rx="117" ry="126" fill="#8d8574"/>
  <g clip-path="url(#bore)">
    <path d="M900 580Q890 760 1100 830" stroke="#a59c89" stroke-width="22" filter="url(#b8)"/>
    <path d="M990 800Q1060 820 1120 780" stroke="#cfc3a8" stroke-width="14" filter="url(#b8)"/>
    <ellipse cx="1075" cy="655" rx="118" ry="130" fill="#ededed"/>
  </g>
</svg>`;

@customElement("app-root")
export class AppRoot extends LitElement {
  @state() private current = 8;

  static styles = css`
    :host { display: flex; flex-direction: column; height: 100vh; overflow: hidden; font-family: "Open Sans", "Noto Sans", "Noto Sans CJK TC", sans-serif; font-size: 22px; color: #444;
      background: linear-gradient(#9b9b97 0 233px, #1e2f66 233px 320px, #8e8e8c 320px 1588px, #030b14 1588px); }
    * { box-sizing: border-box; }
    button { font: inherit; color: inherit; background: none; border: 0; padding: 0; margin: 0; display: flex; align-items: center; justify-content: center; flex: none; }
    svg { display: block; flex: none; }
    ul, ol { list-style: none; margin: 0; padding: 0; }
    .defs { position: absolute; }
    .caret { color: #333; }

    .menubar { flex: none; height: 44px; display: flex; align-items: center; padding: 0 40px; font-size: 28px; line-height: 40px; color: #000; background: linear-gradient(#c6fff0, #b3f3df 40%, #8fcdb7); border-bottom: 2px solid #2f6450; }
    .menus { display: flex; align-items: center; gap: 38px; }
    .menus b { font-weight: 700; font-size: 30px; }
    .status { margin-left: auto; display: flex; align-items: center; gap: 24px; margin-right: 236px; }
    .pair { display: flex; align-items: center; gap: 8px; }
    .wide { gap: 16px; }
    .vert { width: 16px; display: flex; flex-direction: column; font: 700 11px/13px "DejaVu Sans Mono", monospace; text-align: center; color: #34564b; }
    .rates { font-size: 18px; font-weight: 600; line-height: 20px; margin-left: 10px; }
    .small { font-size: 24px; }
    .clock { display: flex; align-items: center; gap: 24px; }
    .clock time { white-space: pre; font-size: 29px; }

    .window { flex: 1; min-height: 0; margin-right: 4px; display: flex; flex-direction: column; border-radius: 8px 8px 10px 10px; overflow: hidden; background: #ececec; }
    .titlebar { flex: none; height: 44px; display: grid; grid-template-columns: 1fr auto 1fr; align-items: center; padding: 0 8px; font-size: 27px; color: #3c3c3c; background: linear-gradient(#e8e8e8, #cfcfcf 50%, #b4b4b4); border-bottom: 2px solid #6a6a66; }
    .lights { display: flex; gap: 16px; padding-left: 8px; }
    .light { width: 24px; height: 24px; border-radius: 50%; border: 2px solid #0006; }
    .red { background: radial-gradient(circle at 50% 85%, #ffc0b0, #ee4a48 50%, #c02c2c); }
    .amber { background: radial-gradient(circle at 50% 85%, #fff3a0, #eaa83c 55%, #b87818); }
    .green { background: radial-gradient(circle at 50% 85%, #e0f8d0, #84c865 50%, #4c9038); }
    .titlebar .end { justify-self: end; }

    .quick { flex: none; height: 62px; display: flex; align-items: center; padding: 0 22px 0 24px; background: #d8d8d8; border-bottom: 3px solid #989898; }
    .quick .btn { gap: 14px; margin-left: 48px; color: #505353; }
    .quick .btn.first { margin-left: 0; }
    .quick .btn.near { margin-left: 26px; }
    .quick .btn.file { margin-left: 54px; gap: 12px; }
    .quick .off, .quick .off .caret { color: #8c8c88; }
    .quick .user { margin-left: auto; gap: 10px; font-size: 23px; color: #444; }
    .quick .help { margin-left: 43px; gap: 8px; }

    .tabs { flex: none; height: 44px; display: flex; align-items: stretch; justify-content: space-between; background: #d8d8d8; border-bottom: 2px solid #989898; }
    .tab { width: 400px; display: flex; align-items: center; gap: 20px; padding: 0 14px 0 20px; font-weight: 700; font-size: 25px; color: #666; background: #ececec; border-right: 3px solid #989898; }
    .tab span { flex: 1; white-space: nowrap; }
    .tabs .fold { margin-right: 11px; }

    .stage { flex: 1; min-height: 0; position: relative; display: flex; flex-direction: column; align-items: flex-start; padding: 8px 8px 0; }
    .ribbon { position: relative; z-index: 1; height: 120px; display: grid; grid-template-columns: 207px 442px 148px 148px 184px 198px 148px 138px 118px 158px 139px; background: #dcdcdc; }
    .group { display: flex; flex-direction: column; align-items: center; padding-top: 9px; background: linear-gradient(#b4b4b4, #b4b4b4) right 9px / 2px 102px no-repeat; }
    .group:last-child { background: none; }
    .tools { height: 78px; display: flex; align-items: center; gap: 26px; }
    .label { height: 30px; gap: 6px; font-size: 23px; line-height: 30px; color: #444; }
    .workspace { background: #b5b5b5; display: grid; grid-template-columns: 28px 1fr; }
    .grip { width: 10px; height: 44px; align-self: center; justify-self: center; border: solid #7c7c7c; border-width: 0 2px; background: linear-gradient(#888, #888) center / 2px 100% no-repeat; }
    .workspace .inner { display: flex; flex-direction: column; align-items: flex-start; padding: 10px 0 0 36px; }
    .workspace .label { color: #fff; font-weight: 700; height: 48px; gap: 4px; padding-top: 6px; }
    .workspace .caret { color: #fff; }

    .panel { position: relative; z-index: 1; flex: 1; width: 600px; margin: 20px 0 -5px 82px; display: flex; flex-direction: column; }
    .browser { flex: 1; border: 2px solid #acacac; background: #dedede; }
    .head { display: flex; align-items: center; gap: 23px; height: 48px; padding-left: 10px; font-size: 22px; color: #666; background: #d2d2d2; }
    .browser .head { border-bottom: 2px solid #acacac; }
    .comments { border: solid #acacac; border-width: 3px 2px 3px; }
    .comments .head { height: 44px; }
    .tree { padding-top: 10px; }
    .row { display: flex; height: 40px; margin-bottom: 8px; padding-left: 14px; }
    .row.l1 { padding-left: 50px; }
    .row.l2 { padding-left: 86px; }
    .toggle { width: 56px; }
    .chip { display: flex; align-items: center; padding: 0 20px 0 6px; background: #cbcbcb; white-space: nowrap; line-height: 28px; }
    .chip .slot { margin-right: 18px; }
    .chip .slot.last { margin-right: 28px; }
    .rootchip { display: flex; align-items: center; background: #c8c8c8; padding: 4px 14px 4px 4px; }
    .rootchip .chip { height: 32px; padding: 0 22px 0 2px; background: #83837f; color: #fff; font-size: 23px; font-weight: 700; }
    .radio { appearance: none; width: 28px; height: 28px; margin: 0 0 0 8px; border: 2px solid #555; border-radius: 50%; background: radial-gradient(#333 0 4px, #eef1f5 6px, #c2cad6 100%); }

    .model { position: absolute; left: 760px; top: 236px; width: 900px; height: 880px; }
    .cube { position: absolute; right: 10px; top: 6px; }
    .cube .home { position: absolute; left: 8px; top: 6px; }
    .cube .more { position: absolute; left: 151px; top: 153px; }

    .navs { position: absolute; left: 0; right: 0; bottom: 8px; display: flex; justify-content: center; gap: 14px; }
    .nav { display: flex; align-items: center; height: 48px; background: #c8c8c8; padding: 0 4px 0 8px; gap: 8px; }
    .nav .mid { display: flex; gap: 21px; padding-right: 13px; }
    .nav .split { gap: 10px; }
    .nav.disp .split { gap: 5px; }

    .timeline { flex: none; display: flex; align-items: flex-start; height: 100px; padding: 20px 8px 0 9px; background: #cbcbcb; }
    .transport { display: flex; padding-right: 25px; }
    .transport button { width: 50px; height: 44px; }
    .track { position: relative; }
    .features { display: flex; }
    .features li::after { content: ""; display: block; width: 4px; height: 8px; margin: 0 auto; background: #686868; }
    .feature { width: 48px; height: 48px; border-radius: 4px; }
    .feature.on { background: #e3e600; }
    .rail { height: 4px; margin: 0 22px; background: #686868; }
    .marker { position: absolute; right: -12px; top: -4px; }
    .timeline .gear { margin: 3px 0 0 auto; }
    .edge { flex: none; height: 4px; background: #747474; border-top: 1px solid #444; }
    .below { flex: none; height: 8px; overflow: hidden; padding-left: 1834px; font-size: 24px; line-height: 20px; color: #5c5c5c; }
  `;

  private vertical(word: string) {
    return html`<span class="vert">${[...word].map((c) => html`<span>${c}</span>`)}</span>`;
  }

  private renderMenubar() {
    return html`<header class="menubar">
      <nav class="menus" aria-label="Application menu">
        <button aria-label="Apple">${appleLogo}</button>
        <button><b>Fusion 360</b></button>
        ${["File", "Edit", "View", "Window", "Share", "Help"].map((m) => html`<button>${m}</button>`)}
      </nav>
      <div class="status">
        ${lineBadge}${creative}${hat}${bluetooth}
        <div class="pair wide">${this.vertical("SEN")}${netArrows}</div>
        <div class="rates"><div>0.4KB/s</div><div>0.4KB/s</div></div>
        <div class="pair">${this.vertical("MEM")}${meter(0.85)}</div>
        <div class="pair wide">
          <div class="pair">${this.vertical("HDD")}${meter(0)}</div>
          <div class="pair">${battery}<span>5:06</span></div>
        </div>
        ${timeMachine}${wifi}${speaker}${flag}
        <div class="pair small"><span>92%</span>${batteryBold}</div>
      </div>
      <div class="clock"><time>週四 下午4:37</time><button aria-label="Search">${search}</button><button aria-label="Notifications">${listIcon}</button></div>
    </header>`;
  }

  private renderRow(n: Node) {
    const chip = html`<div class="chip">
      ${n.bulb === undefined ? nothing : html`<button class="slot" aria-label="Toggle visibility of ${n.label}">${bulb(n.bulb)}</button>`}
      <span class="slot last">${treeIcons[n.kind]}</span><span>${n.label}</span>
    </div>`;
    return html`<li class="row l${n.level}">
      ${n.open === undefined ? html`<span class="toggle"></span>` : html`<button class="toggle" aria-label="Expand ${n.label}">${n.open ? openTri : closedTri}</button>`}
      ${n.root ? html`<div class="rootchip">${chip}<input class="radio" type="radio" checked aria-label="Activate component" /></div>` : chip}
    </li>`;
  }

  private renderStage() {
    return html`<main class="stage">
      ${modelView}
      <div class="ribbon">
        <div class="workspace">
          <span class="grip"></span>
          <div class="inner">${workspaceIcon}<button class="label">MODEL${caret()}</button></div>
        </div>
        ${groups.map((g) => html`<div class="group">
          <div class="tools">${g.icons.map((i) => html`<button aria-label=${i}>${ribbonIcons[i]}</button>`)}</div>
          <button class="label">${g.label}${caret()}</button>
        </div>`)}
      </div>
      <aside class="panel">
        <section class="browser">
          <div class="head"><button aria-label="Collapse browser">${minusDot}</button>BROWSER</div>
          <ul class="tree">${nodes.map((n) => this.renderRow(n))}</ul>
        </section>
        <section class="comments"><div class="head"><button aria-label="Expand comments">${plusDot}</button>COMMENTS</div></section>
      </aside>
      <div class="cube">
        ${icon(180, 180, svg`<path d="M96 34h26l34 72-18 17-80 36-39-83z" fill="#b7b7b7"/><path d="M98 34h24l34 72-18 17z" fill="#c9c9c9"/><path d="M108 36h14l28 60-8 10z" fill="#e6e6e6" opacity=".6"/><path d="M96 34h26l34 72-18 17-80 36-39-83zM98 34l40 89" stroke="#666" stroke-width="1.500" stroke-dasharray="4 3"/><path d="M88 58l28 56-51 23-26-53z" fill="#8ba8c6" stroke="#0a5ac8" stroke-width="2"/><text transform="translate(77 101) rotate(64)" text-anchor="middle" y="7" font-size="21" font-weight="700" fill="#3c4a55">BOTTOM</text><text transform="translate(129 76) rotate(66)" text-anchor="middle" y="4" font-size="15" font-weight="700" fill="#555">BACK</text>`)}
        <button class="home" aria-label="Home view">${icon(28, 30, svg`<path d="M1 14L14 1l13 13v3h-2v11H3V17H1z" fill="#fff" stroke="#888" stroke-width="1.500"/><path d="M11 17h6v11h-6z" fill="#777"/>`)}</button>
        <button class="more" aria-label="View options">${icon(24, 20, svg`<path d="M1 1v4h22V1M5 8h14l-7 10z" fill="#fff" stroke="#777" stroke-width="1.500"/>`)}</button>
      </div>
      <div class="navs">
        <div class="nav">
          <button class="split" aria-label="Orbit">${nav.orbit}${caret()}</button>
          <div class="mid">
            <button aria-label="Look at">${nav.look}</button>
            <button aria-label="Pan">${nav.pan}</button>
            <button aria-label="Zoom">${nav.zoom}</button>
          </div>
          <button class="split" aria-label="Fit">${nav.fit}${caret()}</button>
        </div>
        <div class="nav disp">
          <button class="split" aria-label="Display settings">${nav.display}${caret()}</button>
          <button class="split" aria-label="Grid settings">${nav.grid}${caret()}</button>
          <button class="split" aria-label="Viewports">${nav.views}${caret()}</button>
        </div>
      </div>
    </main>`;
  }

  render() {
    return html`
      <svg class="defs" width="0" height="0" aria-hidden="true">${defs}</svg>
      ${this.renderMenubar()}
      <div class="window">
        <div class="titlebar">
          <div class="lights"><button class="light red" aria-label="Close"></button><button class="light amber" aria-label="Minimize"></button><button class="light green" aria-label="Zoom"></button></div>
          <span>Autodesk Fusion 360</span>
          <button class="end" aria-label="Full screen">${fullscreen}</button>
        </div>
        <div class="quick">
          <button class="btn first" aria-label="Data panel">${apps}</button>
          <button class="btn file" aria-label="File">${fileIcon}${caret()}</button>
          <button class="btn" aria-label="Save">${saveIcon}</button>
          <button class="btn" aria-label="Undo">${undoIcon}${caret()}</button>
          <button class="btn near off" aria-label="Redo">${redoIcon}${caret()}</button>
          <button class="user">Changjung Tai${caret()}</button>
          <button class="help" aria-label="Help">${help}${caret()}</button>
        </div>
        <div class="tabs">
          <div class="tab">${docCube}<span>fishing f...s new v6*</span><button aria-label="Close tab">${closeX}</button></div>
          <button class="fold" aria-label="Collapse toolbar">${chevUp}</button>
        </div>
        ${this.renderStage()}
        <footer class="timeline">
          <div class="transport">${transport.map(([n, i]) => html`<button aria-label=${n}>${i}</button>`)}</div>
          <div class="track">
            <ol class="features">${[...history].map((f, i) => html`<li><button class=${classMap({ feature: true, on: i === this.current })} aria-label=${featureNames[f]} @click=${() => (this.current = i)}>${features[f]}</button></li>`)}</ol>
            <div class="rail"></div>
            ${icon(24, 64, svg`<path d="M0 0h24v8l-11 9v47h-2V17L0 8z" fill="#666"/>`, "marker")}
          </div>
          <button class="gear" aria-label="Timeline settings">${gear}</button>
        </footer>
        <div class="edge"></div>
      </div>
      <div class="below">welcome</div>`;
  }
}
